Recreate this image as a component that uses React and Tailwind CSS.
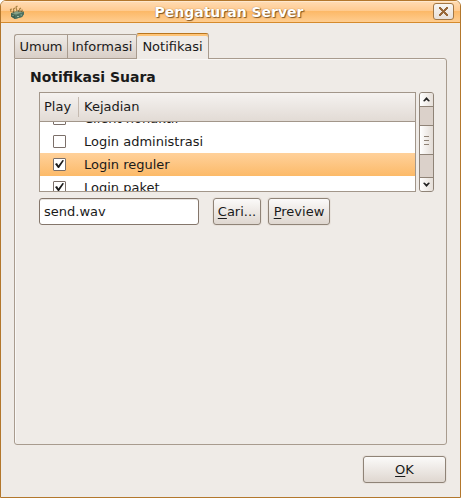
import { useState } from "react";

const EVENTS = [
  { name: "Client nonaktif", play: false },
  { name: "Login administrasi", play: false },
  { name: "Login reguler", play: true },
  { name: "Login paket", play: true },
];

function AppIcon() {
  return (
    <svg width="16" height="16" viewBox="0 0 16 16" aria-hidden="true">
      <path d="M2 9L8 7L15 7.5V10L13 13L6 15L2 12.5Z" fill="#567a66" />
      <path d="M2 9L6 11.5V15L2 12.5Z" fill="#41604f" />
      <path d="M6 11.5L15 8V10L13 13L6 15Z" fill="#4d7060" />
      <path d="M3 9L8 7L14 8L7 10.5Z" fill="#87a188" />
      <path d="M2 8L1.5 5.5L3 5M5 8L4.5 5L6 4M8 7.5L7 3L8.5 2M11 8L10.5 5L12 4M13.5 8L13 5.5" fill="none" stroke="#a98345" strokeWidth="1.2" />
      <path d="M4 7L5 9M9 6L10 8M12 6.5L12.5 8" stroke="#66583a" strokeWidth="1" />
      <path d="M3.5 11.5h1M8 12.5h2M11.5 11h1.5" stroke="#9dbda5" strokeWidth="1" />
    </svg>
  );
}

function TitleBar() {
  return (
    <header className="flex h-[22px] items-center justify-between border-b border-[#d58a2c] bg-[linear-gradient(#ffdcb5_0%,#ffcb91_45%,#fcb968_50%,#ffcd90_100%)] pl-2 pr-1.5 shadow-[inset_0_1px_#ffe8cd]">
      <AppIcon />
      <h1 className="text-[14px] leading-4 font-bold text-white [text-shadow:1px_1px_1px_#805522,0_0_1px_#9a6930]">
        Pengaturan Server
      </h1>
      <button
        type="button"
        aria-label="Tutup"
        className="flex h-[17px] w-[21px] items-center justify-center rounded-[3px] border border-[#a27745] bg-linear-to-b from-[#f8f5f1] to-[#e8e0d9]"
      >
        <svg width="9" height="9" viewBox="0 0 9 9" shapeRendering="crispEdges" aria-hidden="true">
          <path
            d="M0 0h2v1h1v1h1v1h1v-1h1v-1h1v-1h2v2h-1v1h-1v1h-1v1h1v1h1v1h1v2h-2v-1h-1v-1h-1v-1h-1v1h-1v1h-1v1h-2v-2h1v-1h1v-1h1v-1h-1v-1h-1v-1h-1z"
            fill="#99693a"
          />
        </svg>
      </button>
    </header>
  );
}

function Tab({ children, active, onClick, className }) {
  return (
    <button
      type="button"
      role="tab"
      aria-selected={active}
      onClick={onClick}
      className={
        (active
          ? "relative z-10 -mb-px h-[26px] rounded-t-[3px] border border-b-0 border-t-[#b8751f] border-x-[#a89b8e] bg-[#efebe7] shadow-[inset_0_2px_#ffc477] "
          : "h-6 border border-r-0 border-b-0 border-[#a89b8e] bg-linear-to-b from-[#efebe7] to-[#d9cfc7] ") + className
      }
    >
      {children}
    </button>
  );
}

function PushButton({ mnemonic, rest, className }) {
  return (
    <button
      type="button"
      className={
        "h-[27px] rounded-[3px] border border-[#8f8377] bg-linear-to-b from-[#fbfaf9] to-[#dfd7d0] shadow-[0_0_0_1px_#e8e2dc] " +
        className
      }
    >
      <span className="underline underline-offset-2">{mnemonic}</span>
      {rest}
    </button>
  );
}

function CheckBox({ checked, onChange, label }) {
  return (
    <span className="relative block size-[13px]">
      <input
        type="checkbox"
        aria-label={label}
        checked={checked}
        onChange={onChange}
        className="block size-[13px] appearance-none rounded-[1px] border border-[#7b6f69] bg-white"
      />
      {checked && (
        <svg className="pointer-events-none absolute inset-0" width="13" height="13" viewBox="0 0 13 13" aria-hidden="true">
          <path d="M2 6L4 5L5.4 7.5L9.5 2L11 2.5L6 10H5Z" fill="#1a1a1a" />
        </svg>
      )}
    </span>
  );
}

function ScrollBar() {
  return (
    <div className="flex w-[15px] flex-col rounded-[3px] border border-[#8f8377] bg-[#dbd1ca]">
      <button
        type="button"
        aria-label="Gulir ke atas"
        className="flex h-3.5 items-center justify-center rounded-t-[2px] border-b border-[#8f8377] bg-linear-to-r from-white to-[#e6dfd9]"
      >
        <svg width="7" height="5" viewBox="0 0 7 5" aria-hidden="true">
          <path d="M0 4L3.5 0L7 4L5.5 4.5L3.5 2.8L1.5 4.5Z" fill="#222" />
        </svg>
      </button>
      <div className="flex flex-1 flex-col">
        <div className="grow-[18]" />
        <div className="flex h-[30px] flex-col items-center justify-center gap-[3px] border-y border-[#8f8377] bg-linear-to-r from-white to-[#e3dcd6]">
          <span className="h-px w-[5px] bg-[#8f8377]" />
          <span className="h-px w-[5px] bg-[#8f8377]" />
          <span className="h-px w-[5px] bg-[#8f8377]" />
        </div>
        <div className="grow-[22]" />
      </div>
      <button
        type="button"
        aria-label="Gulir ke bawah"
        className="flex h-3.5 items-center justify-center rounded-b-[2px] border-t border-[#8f8377] bg-linear-to-r from-white to-[#e6dfd9]"
      >
        <svg width="7" height="5" viewBox="0 0 7 5" aria-hidden="true">
          <path d="M0 1L3.5 5L7 1L5.5 0.5L3.5 2.2L1.5 0.5Z" fill="#222" />
        </svg>
      </button>
    </div>
  );
}

function EventTable() {
  const [events, setEvents] = useState(EVENTS);
  const toggle = (name) =>
    setEvents(events.map((e) => (e.name === name ? { ...e, play: !e.play } : e)));

  return (
    <table className="block min-w-0 flex-1 border border-[#a2968a] bg-white">
      <thead className="block border-b border-[#a2968a] bg-linear-to-b from-[#f5f2f0] to-[#e2dbd5]">
        <tr className="flex h-7 items-center">
          <th className="w-[39px] border-r border-[#c5bab0] pl-1 text-left leading-5 font-normal">Play</th>
          <th className="flex-1 pl-[5px] text-left font-normal">Kejadian</th>
        </tr>
      </thead>
      <tbody className="block h-[69px] overflow-hidden">
        {events.map((e) => (
          <tr
            key={e.name}
            className={
              "flex h-[23px] items-center first:-mt-[15px] " +
              (e.name === "Login reguler" ? "bg-linear-to-b from-[#ffd19a] to-[#fcba68]" : "")
            }
          >
            <td className="w-[39px] pl-[13px]">
              <CheckBox checked={e.play} onChange={() => toggle(e.name)} label={e.name} />
            </td>
            <td className="flex-1 pl-[5px]">{e.name}</td>
          </tr>
        ))}
      </tbody>
    </table>
  );
}

export default function App() {
  const [tab, setTab] = useState("Notifikasi");
  return (
    <div className="bg-white">
      <div className="flex min-h-screen flex-col overflow-hidden rounded-t-[6px] border border-[#b3772c] bg-[#efebe7] font-['DejaVu_Sans',sans-serif] text-[13px] leading-4 text-[#1a1a1a]">
        <TitleBar />
        <main className="flex flex-1 flex-col px-[13px] pt-2.5 pb-3.5">
          <div role="tablist" className="flex items-end">
            <Tab active={tab === "Umum"} onClick={() => setTab("Umum")} className="w-[53px] rounded-tl-[3px]">
              Umum
            </Tab>
            <Tab active={tab === "Informasi"} onClick={() => setTab("Informasi")} className="w-[69px]">
              Informasi
            </Tab>
            <Tab active={tab === "Notifikasi"} onClick={() => setTab("Notifikasi")} className="w-[73px]">
              Notifikasi
            </Tab>
          </div>
          <section
            role="tabpanel"
            className="flex-1 rounded-b-[3px] rounded-tr-[3px] border border-[#a89b8e] px-3 pt-2.5 shadow-[inset_1px_1px_#f9f7f5]"
          >
            <h2 className="pl-[3px] text-[14px] leading-4 font-bold">Notifikasi Suara</h2>
            <div className="mt-[7px] ml-3 flex gap-[3px]">
              <EventTable />
              <ScrollBar />
            </div>
            <div className="mt-1.5 ml-3 flex">
              <input
                type="text"
                aria-label="Berkas suara"
                defaultValue="send.wav"
                className="h-[27px] w-40 rounded-[3px] border border-[#84766b] bg-white px-1 shadow-[inset_0_1px_#e8e4e0]"
              />
              <PushButton mnemonic="C" rest="ari..." className="ml-3.5 w-12" />
              <PushButton mnemonic="P" rest="review" className="ml-[7px] w-[62px]" />
            </div>
          </section>
          <div className="mt-[11px] flex justify-end pr-px">
            <PushButton mnemonic="O" rest="K" className="w-[83px]" />
          </div>
        </main>
      </div>
    </div>
  );
}
